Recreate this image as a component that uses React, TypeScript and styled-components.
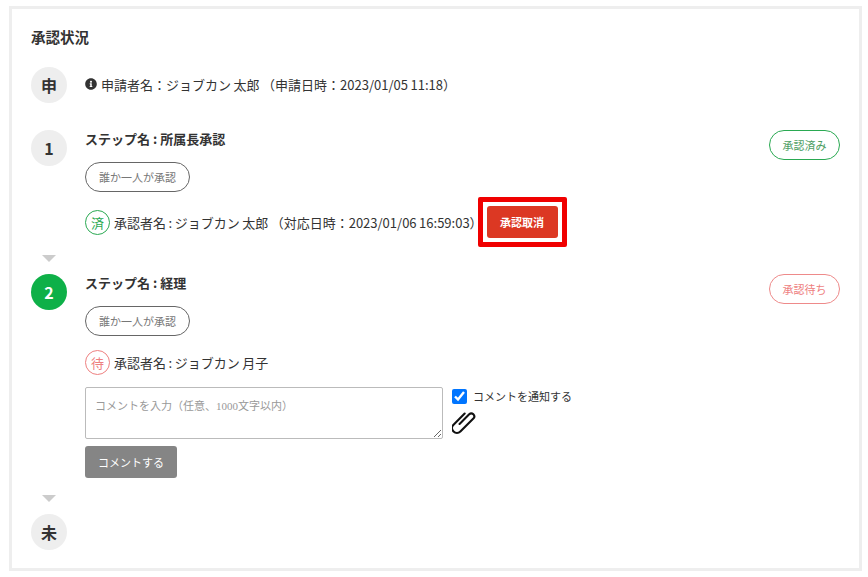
import React from 'react'
import styled, {createGlobalStyle} from 'styled-components'
import {FaInfoCircle} from 'react-icons/fa'

const GlobalStyle = createGlobalStyle`
  html, body {
    margin: 0;
    padding: 0;
    background: #fff;
    color: #333;
    font-family: "Noto Sans CJK JP", "Noto Sans", sans-serif;
  }
`

const Panel = styled.section`
  box-sizing: border-box;
  width: 853px;
  height: 565px;
  margin: 6px 0 0 9px;
  padding: 18px 19px 0 19px;
  border: 3px solid #eeeeee;
`

const Title = styled.h2`
  margin: 0 0 20px;
  font-size: 14.5px;
  line-height: 20px;
  font-weight: 700;
  color: #333;
`

const Row = styled.div<{$height: number}>`
  display: grid;
  grid-template-columns: 36px 1fr auto;
  column-gap: 18px;
  height: ${p => p.$height}px;
`

const Circle = styled.div<{$active?: boolean}>`
  width: 36px;
  height: 36px;
  border-radius: 50%;
  display: flex;
  align-items: center;
  justify-content: center;
  font-size: 16px;
  font-weight: 700;
  background: ${p => (p.$active ? '#0eb048' : '#eeeeee')};
  color: ${p => (p.$active ? '#fff' : '#333')};
`

const ApplicantLine = styled.div`
  display: flex;
  align-items: center;
  gap: 4px;
  height: 34px;
  font-size: 13px;
  word-spacing: -0.4px;
  color: #333;
`

const StepName = styled.div`
  font-size: 13px;
  line-height: 18px;
  font-weight: 700;
  color: #333;
`

const RulePill = styled.div`
  box-sizing: border-box;
  width: 105px;
  height: 30px;
  margin-top: 14px;
  border: 1px solid #666;
  border-radius: 15px;
  display: flex;
  align-items: center;
  justify-content: center;
  font-size: 11px;
  color: #777;
`

const Approver = styled.div`
  display: flex;
  align-items: center;
  margin-top: 14px;
  min-height: 25px;
  font-size: 13px;
  word-spacing: -0.4px;
  color: #333;
`

const Mark = styled.span<{$color: string}>`
  box-sizing: border-box;
  width: 25px;
  height: 25px;
  margin-right: 4px;
  border: 1px solid ${p => p.$color};
  border-radius: 50%;
  display: flex;
  align-items: center;
  justify-content: center;
  font-size: 13px;
  color: ${p => p.$color};
`

const CancelButton = styled.button`
  position: relative;
  width: 71px;
  height: 32px;
  margin-left: 4px;
  padding: 0;
  border: 0;
  border-radius: 3px;
  background: #dc3823;
  color: #fff;
  font-family: inherit;
  font-size: 11px;
  font-weight: 700;

  &::after {
    content: '';
    position: absolute;
    inset: -9px;
    border: 5px solid #f00000;
    border-radius: 2px;
  }
`

const StatusPill = styled.div<{$color: string; $text: string}>`
  box-sizing: border-box;
  width: 71px;
  height: 30px;
  border: 1px solid ${p => p.$color};
  border-radius: 15px;
  display: flex;
  align-items: center;
  justify-content: center;
  font-size: 11px;
  color: ${p => p.$text};
`

const Arrow = styled.div<{$height: number}>`
  width: 36px;
  height: ${p => p.$height}px;
  display: flex;
  justify-content: center;
  align-items: flex-start;

  &::before {
    content: '';
    border-style: solid;
    border-width: 7px 7px 0 7px;
    border-color: #cccccc transparent transparent transparent;
  }
`

const CommentArea = styled.div`
  display: flex;
  margin-top: 12px;
  gap: 9px;
`

const CommentInput = styled.textarea`
  box-sizing: border-box;
  width: 358px;
  height: 52px;
  padding: 9px 9px;
  border: 1px solid #bbbbbb;
  border-radius: 2px;
  font-family: "Liberation Serif", "Noto Sans CJK JP", serif;
  font-size: 11px;
  color: #333;

  &::placeholder {
    color: #999;
  }
`

const CommentOptions = styled.div`
  display: flex;
  flex-direction: column;
  padding-top: 2px;
`

const NotifyLabel = styled.label`
  display: flex;
  align-items: center;
  gap: 6px;
  font-size: 11px;
  line-height: 15px;
  color: #333;
`

const NotifyCheck = styled.input`
  width: 15px;
  height: 15px;
  margin: 0;
  accent-color: #0075ff;
`

const ClipIcon = styled.svg`
  display: block;
  width: 24px;
  height: 24px;
  margin-top: 6px;
`

const CommentButton = styled.button`
  display: block;
  width: 92px;
  height: 32px;
  margin-top: 7px;
  padding: 0;
  border: 0;
  border-radius: 3px;
  background: #858585;
  color: #fff;
  font-family: inherit;
  font-size: 11px;
`

export default function App() {
  return (
    <>
      <GlobalStyle />
      <Panel>
        <Title>承認状況</Title>

        <Row $height={63}>
          <Circle>申</Circle>
          <ApplicantLine>
            <FaInfoCircle size={12} color="#333" />
            申請者名：ジョブカン 太郎 （申請日時：2023/01/05 11:18）
          </ApplicantLine>
        </Row>

        <Row $height={125}>
          <Circle>1</Circle>
          <div>
            <StepName>ステップ名 : 所属長承認</StepName>
            <RulePill>誰か一人が承認</RulePill>
            <Approver>
              <Mark $color="#2aa952">済</Mark>
              承認者名 : ジョブカン 太郎 （対応日時：2023/01/06 16:59:03）
              <CancelButton>承認取消</CancelButton>
            </Approver>
          </div>
          <StatusPill $color="#2aa952" $text="#4d9e63">承認済み</StatusPill>
        </Row>
        <Arrow $height={19} />

        <Row $height={221}>
          <Circle $active>2</Circle>
          <div>
            <StepName>ステップ名 : 経理</StepName>
            <RulePill>誰か一人が承認</RulePill>
            <Approver>
              <Mark $color="#ee8080">待</Mark>
              承認者名 : ジョブカン 月子
            </Approver>
            <CommentArea>
              <CommentInput placeholder="コメントを入力（任意、1000文字以内）" />
              <CommentOptions>
                <NotifyLabel>
                  <NotifyCheck type="checkbox" defaultChecked readOnly />
                  コメントを通知する
                </NotifyLabel>
                <ClipIcon viewBox="0 0 24 24" fill="none" stroke="#111" strokeWidth="2" strokeLinecap="round" strokeLinejoin="round">
                  <g transform="translate(12 11) rotate(45) scale(1.05)">
                    <path d="M-1 5V-8a2.8 2.8 0 0 1 5.6 0V9.5a4.6 4.6 0 0 1-9.2 0V-5.5" />
                  </g>
                </ClipIcon>
              </CommentOptions>
            </CommentArea>
            <CommentButton>コメントする</CommentButton>
          </div>
          <StatusPill $color="#ee8a8a" $text="#ee8080">承認待ち</StatusPill>
        </Row>
        <Arrow $height={19} />

        <Row $height={36}>
          <Circle>未</Circle>
        </Row>
      </Panel>
    </>
  )
}
